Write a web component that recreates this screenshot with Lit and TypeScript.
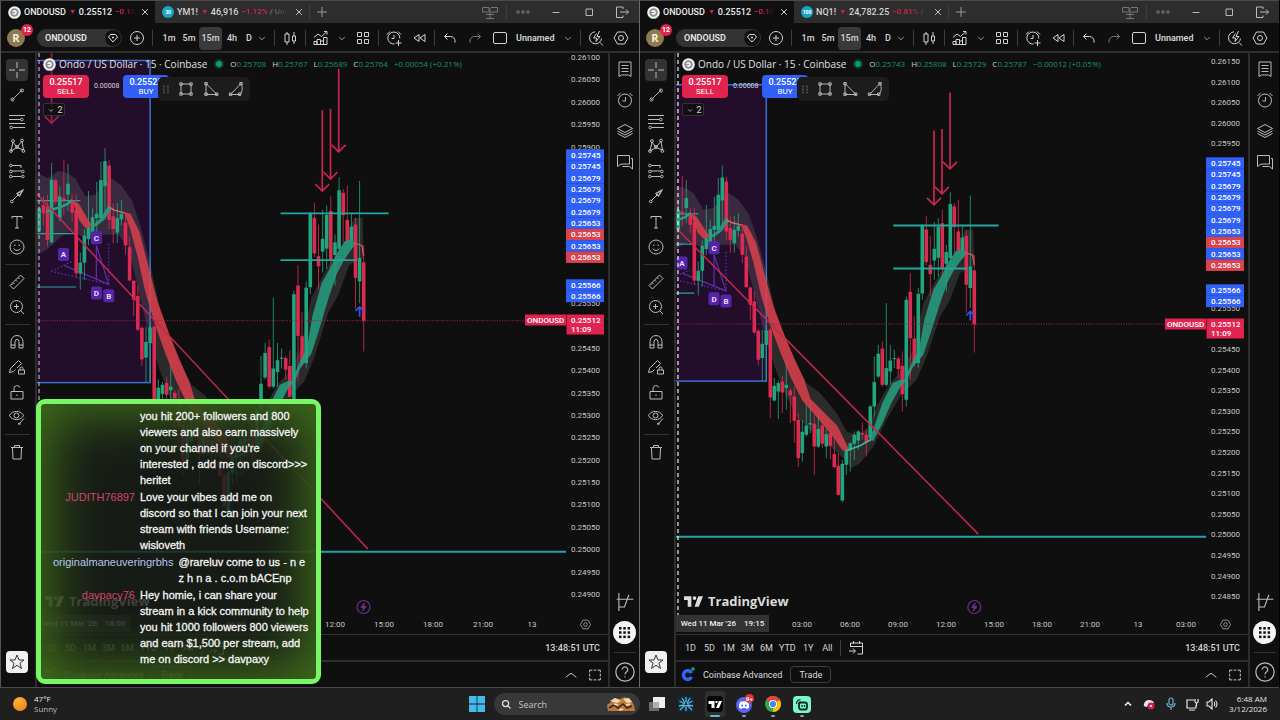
import { LitElement, html, svg, css, nothing } from "lit";
import { customElement, property } from "lit/decorators.js";

/* ---------- icons (18 x 18 grid, 1px strokes) ---------- */
const PATHS: Record<string, string> = {
  plus: "M9 4v10M4 9h10",
  pluscircle: "M9 2.5a6.5 6.5 0 1 0 0 13a6.5 6.5 0 1 0 0-13M9 6v6M6 9h6",
  close: "M5.8 5.8l6.4 6.4M12.2 5.8l-6.4 6.4",
  chevron: "M6 8l3 3l3-3",
  chevup: "M3 11.5L9 7l6 4.5",
  candles: "M6 3v2M6 13v3M4 5h4v8H4zM13 3v4M13 12v3M11.5 7h3v5h-3z",
  indicators: "M2 15.5V12.5h3v3M5 15.5V10.5h3.5v5M8.5 15.5v-3.5h3v3.5M11.5 15.5V8.5H15v7H2M2 8.5L6 5l3.5 2.5L14.5 3M12 2.5h3V5.5",
  grid: "M3.5 3.5h4v4h-4zM10.5 3.5h4v4h-4zM3.5 10.5h4v4h-4zM10.5 10.5h4v4h-4z",
  alarmplus: "M14.8 9.5A6 6 0 1 0 9.5 15M9 6v3.5H6.5M2 5.5L5 2.5M13 2.5l3 3M13.5 11v6M10.5 14h6",
  rewind: "M9 5.5v7L4 9zM15 5.5v7L10 9z",
  undo: "M6.5 4.5L3.5 7.5l3 3M3.5 7.5H9.5a4.5 4.5 0 0 1 4.5 4.5v1.5",
  redo: "M11.5 4.5l3 3l-3 3M14.5 7.5H8.5A4.5 4.5 0 0 0 4 12v1.5",
  square: "M4 3.5h10a1.5 1.5 0 0 1 1.5 1.5v8a1.5 1.5 0 0 1-1.5 1.5H4A1.5 1.5 0 0 1 2.5 13V5A1.5 1.5 0 0 1 4 3.5z",
  flash: "M8 2.8A6 6 0 1 0 14.5 9.5M9.5 4.5L6.5 9h3l-.5 3.5L13 7.5h-3l2.5-5.5M13 13.5l3 3",
  hex: "M5.5 3h7L16 9l-3.5 6h-7L2 9zM9 6.5a2.5 2.5 0 1 0 0 5a2.5 2.5 0 1 0 0-5",
  layout: "M1.5 4.5h6.5v4.5H1.5zM10 4.5h6.5v4.5H10M9 5v10M5 15.5h8M5 11.5h8",
  dots: "M4 7.7a1.3 1.3 0 1 0 0 2.6a1.3 1.3 0 1 0 0-2.6M9 7.7a1.3 1.3 0 1 0 0 2.6a1.3 1.3 0 1 0 0-2.6M14 7.7a1.3 1.3 0 1 0 0 2.6a1.3 1.3 0 1 0 0-2.6",
  min: "M5.5 9.5h7",
  max: "M6 6h6.5v6.5H6z",
  exit: "M10 6V4H3.5v10.5H10V12.5M7 9h8.5M13 6.5L15.5 9L13 11.5",
  cross: "M9 1v6M9 11v6M1 9h6M11 9h6",
  trend: "M4.2 13.8L13.8 4.2M3 13.5a1.5 1.5 0 1 0 3 0a1.5 1.5 0 1 0-3 0M12.5 4.5a1.5 1.5 0 1 0 3 0a1.5 1.5 0 1 0-3 0",
  fib: "M1 3.5h16M1 7.5h11.5M1 11.5h16M5 15.5h12M12.5 7.5a1.3 1.3 0 1 0 2.6 0a1.3 1.3 0 1 0-2.6 0M2 15.5a1.3 1.3 0 1 0 2.6 0a1.3 1.3 0 1 0-2.6 0",
  pattern: "M3 14L5 5l4 5.5l5-6.5l1.5 9L9 10.5L3 14M1.6 14a1.4 1.4 0 1 0 2.8 0a1.4 1.4 0 1 0-2.8 0M3.6 4a1.4 1.4 0 1 0 2.8 0a1.4 1.4 0 1 0-2.8 0M12.6 3.5a1.4 1.4 0 1 0 2.8 0a1.4 1.4 0 1 0-2.8 0M14 14a1.4 1.4 0 1 0 2.8 0a1.4 1.4 0 1 0-2.8 0M7.6 10a1.4 1.4 0 1 0 2.8 0a1.4 1.4 0 1 0-2.8 0",
  forecast: "M4 3.5h9M4 9h9.5M4 14.5h9.5M1.5 3.5a1.3 1.3 0 1 0 2.6 0a1.3 1.3 0 1 0-2.6 0M1.5 9.5a1.3 1.3 0 1 0 2.6 0a1.3 1.3 0 1 0-2.6 0M1.5 14.5a1.3 1.3 0 1 0 2.6 0a1.3 1.3 0 1 0-2.6 0M13.5 9.5a1.3 1.3 0 1 0 2.6 0a1.3 1.3 0 1 0-2.6 0M13.5 14.5a1.3 1.3 0 1 0 2.6 0a1.3 1.3 0 1 0-2.6 0M13 3v3",
  arrow: "M4 14L10 8M2.5 14.5a1.3 1.3 0 1 0 2.6 0a1.3 1.3 0 1 0-2.6 0M8.5 6.5L15.5 2.5L11.5 9.5zM9.5 6.5l2 2L14 4z",
  text: "M4 5.5V3.5h10v2M9 3.5v11.5M7 15h4",
  smile: "M9 2a7 7 0 1 0 0 14a7 7 0 1 0 0-14M6.8 6.5v1.5M11.2 6.5v1.5M5.8 10.5c1 2.5 5.4 2.5 6.4 0",
  ruler: "M2 12.5L12.5 2l3.5 3.5L5.5 16zM5 9.5l1.5 1.5M7.5 7l1.5 1.5M10 4.5l1.5 1.5M3.5 11l1 1",
  zoomin: "M8.5 2.5a6 6 0 1 0 0 12a6 6 0 1 0 0-12M13 13l3 3M8.5 6v5M6 8.5h5",
  magnet: "M3 15V8.5a6 6 0 0 1 12 0V15h-4V8.5a2 2 0 0 0-4 0V15zM3 12h4M11 12h4",
  pencillock: "M2.5 10.5L10.5 2.5l3 3L9 10M2.5 10.5L1.5 14.5l4-1l2-2M10.5 12h6v4h-6zM12 12v-1.5a1.5 1.5 0 0 1 3 0V12",
  unlock: "M3 8.5h12v7.5H3zM6 8.5V5.5a3 3 0 0 1 5.8-1M9 11.5v1.5",
  eye: "M1.5 7.5C4 2 13 2 15.5 7.5C13 13 4 13 1.5 7.5M8.5 5a2.5 2.5 0 1 0 0 5a2.5 2.5 0 1 0 0-5M10 16l2-1l4-4.5M10 16h3",
  trash: "M3 4.5h12M6.5 4.5V2.5h5v2M4.5 4.5l.5 11.5h8l.5-11.5",
  star: "M9 2l2 5h5l-4 3.2L13.5 15.5L9 12.3L4.5 15.5L6 10.2L2 7h5z",
  watch: "M3 2h12v14.5l-2.5-1.5H5.5L3 16.5zM5.5 5.5h7M5.5 8.5h7M5.5 11.5h7",
  alarm: "M9 3a6.5 6.5 0 1 0 0 13a6.5 6.5 0 1 0 0-13M9.5 6v4H6.5M1.5 5L4.5 2M13.5 2l3 3",
  layers: "M9 2.5L16.5 6.5L9 10.5L1.5 6.5zM1.5 9L9 13L16.5 9M1.5 11.5L9 15.5L16.5 11.5",
  chat: "M1.5 2.5h12V11H5L1.5 13.5zM15 5.5h1.5V16L13.5 13.5H6.5",
  tree: "M3.5 1v16M1.5 6.5h15M3.5 13.5h5l4-11",
  help: "M9 1.5a7.5 7.5 0 1 0 0 15a7.5 7.5 0 1 0 0-15M6.7 7a2.3 2.3 0 1 1 3.5 2q-1.2.7-1.2 2M9 12.5v1",
  calendar: "M3.5 8V4h12v11h-5M3.5 7.5h12M6.5 2v3M12.5 2v3M2 12h6M6 9.5L8.5 12L6 14.5",
  full: "M3 6V3.5h3M12 3.5h3V6M15 12v2.5h-3M6 14.5H3V12M3 7.5v3M15 7.5v3M7.5 3.5h3M7.5 14.5h3",
  box4: "M4 4h10v10H4zM2.8 2.8h2.4v2.4H2.8zM12.8 2.8h2.4v2.4h-2.4zM2.8 12.8h2.4v2.4H2.8zM12.8 12.8h2.4v2.4h-2.4z",
  tri: "M4 3.5v11h11zM2.8 2.5h2.4v2.4H2.8zM2.8 13h2.4v2.4H2.8zM13.5 13h2.4v2.4h-2.4z",
  curve: "M3.5 14.5L14 3.5q3 6-1 11zM2.3 13h2.4v2.4H2.3zM12.8 2.5h2.4v2.4h-2.4zM11.5 13h2.4v2.4h-2.4z",
  mag: "M7.5 2.5a5 5 0 1 0 0 10a5 5 0 1 0 0-10M11.3 11.3l4.2 4.2",
};
const ic = (name: string, size = 18) => html`<svg width=${size} height=${size} viewBox="0 0 18 18" fill="none"
  stroke="currentColor" stroke-width="1" aria-hidden="true"><path d=${PATHS[name]}></path></svg>`;

const tvLogo = (w: number, h: number) => html`<svg width=${w} height=${h} viewBox="0 0 36 20" fill="currentColor" aria-hidden="true">
  <path d="M0 0h14v20H7V7H0z"></path><circle cx="20" cy="3.5" r="3.5"></circle><path d="M27 0h9l-8 20h-8z"></path></svg>`;

const coin = html`<svg width="13" height="13" viewBox="0 0 13 13" aria-hidden="true"><circle cx="6.5" cy="6.5" r="6.3" fill="#f2f2f2"></circle>
  <circle cx="6.5" cy="6.5" r="3.3" fill="none" stroke="#8b8d92" stroke-width="1.8"></circle><path d="M3 6.5h4" stroke="#8b8d92"></path></svg>`;

/* ---------- price series: [bar, up?, high, bodyTop, bodyBottom, low] ---------- */
type Bar = [number, number, number, number, number, number];
const BARS: Bar[] = [
  [0, 0, 375, 422, 584, 668], [1, 1, 197, 410, 475, 535], [2, 0, 300, 318, 465, 550], [3, 1, 285, 323, 360, 385],
  [4, 0, 210, 305, 362, 372], [5, 0, 220, 230, 292, 370], [6, 1, 187, 223, 385, 395], [7, 1, 345, 367, 402, 485],
  [8, 0, 240, 280, 415, 440], [9, 1, 265, 291, 384, 440], [10, 1, 277, 357, 392, 450], [11, 0, 318, 405, 433, 498],
  [12, 0, 258, 299, 397, 407], [13, 1, 282, 288, 491, 510], [14, 1, 475, 492, 700, 715], [15, 0, 560, 626, 700, 710],
  [16, 0, 430, 486, 625, 750], [17, 1, 500, 510, 810, 830], [18, 0, 665, 708, 793, 845], [19, 0, 680, 686, 718, 745],
  [20, 1, 660, 685, 688, 715], [21, 1, 645, 692, 725, 765], [22, 1, 520, 715, 765, 770], [23, 0, 635, 656, 765, 770],
  [24, 1, 645, 672, 740, 745], [25, 1, 680, 757, 830, 860], [26, 1, 825, 830, 925, 935], [27, 0, 898, 915, 938, 980],
  [28, 0, 878, 910, 914, 930], [29, 1, 900, 905, 932, 960], [30, 1, 905, 915, 942, 990], [31, 1, 938, 940, 962, 1025],
  [32, 1, 955, 960, 1005, 1035], [33, 1, 990, 1002, 1112, 1118], [34, 0, 970, 1008, 1095, 1098], [35, 0, 915, 973, 1012, 1015],
  [36, 0, 905, 910, 948, 988], [37, 1, 898, 913, 950, 985], [38, 0, 875, 887, 942, 955], [39, 1, 840, 897, 950, 955],
  [40, 0, 855, 882, 950, 1035], [41, 1, 810, 880, 884, 910], [42, 1, 820, 887, 915, 920], [43, 1, 870, 906, 970, 995],
  [44, 0, 850, 870, 985, 1012], [45, 0, 770, 800, 873, 940], [46, 0, 775, 782, 797, 880], [47, 1, 690, 765, 775, 840],
  [48, 0, 738, 755, 788, 850], [49, 1, 752, 760, 785, 868], [50, 1, 745, 768, 812, 815], [51, 0, 595, 600, 803, 865],
  [52, 1, 595, 602, 645, 755], [53, 1, 600, 642, 685, 755], [54, 0, 598, 603, 690, 708], [55, 0, 485, 515, 608, 612],
  [56, 0, 470, 473, 525, 570], [57, 0, 350, 380, 472, 475], [58, 0, 290, 312, 375, 400], [59, 1, 250, 288, 303, 320],
  [60, 1, 258, 300, 340, 368], [61, 0, 260, 295, 330, 370], [62, 0, 140, 155, 305, 330], [63, 1, 107, 143, 212, 300],
  [64, 1, 145, 195, 300, 310], [65, 1, 200, 288, 300, 345], [66, 1, 272, 298, 345, 360], [67, 1, 225, 325, 358, 375],
  [68, 1, 330, 348, 423, 470], [69, 1, 395, 423, 453, 497], [70, 0, 235, 278, 452, 465], [71, 0, 235, 250, 285, 310],
  [72, 1, 150, 205, 235, 280], [73, 0, 138, 245, 250, 290], [74, 1, 213, 240, 300, 309], [75, 0, 192, 196, 254, 262],
  [76, 1, 148, 194, 367, 370], [77, 0, 236, 268, 360, 378], [78, 0, 240, 264, 287, 320], [79, 1, 268, 273, 337, 340],
];
const SHADE = "-10,176 20,190 50,170 75,175 100,190 130,240 160,235 190,200 205,190 235,210 265,250 290,320 320,430 350,560 400,690 440,760 480,790 530,850 560,905 590,915 620,900 650,830 690,760 720,730 760,660 790,520 840,430 880,380 915,300 940,300 942,410 900,430 870,510 840,560 800,680 770,750 720,800 680,870 640,950 600,1000 575,1015 550,985 500,940 450,900 410,860 370,780 340,700 310,600 280,480 255,380 225,345 190,345 150,350 120,350 90,335 60,350 20,385 -10,401";
const DOWN = [
  "92,252 110,260 135,300 150,322 130,327 113,308",
  "243,283 262,288 288,338 315,438 340,528 375,620 405,690 433,750 452,808 482,838 532,888 562,948 568,962 548,962 522,925 477,870 427,812 393,745 362,670 332,590 304,500 281,400 259,325",
];
const UP = [
  "150,320 175,300 198,262 206,275 185,305 160,323",
  "628,930 643,890 667,820 698,760 720,750 733,750 757,695 777,660 793,570 820,480 845,438 866,395 888,363 912,358 917,374 903,392 884,418 863,457 840,522 812,610 790,675 758,714 743,748 722,770 693,822 668,880 640,934",
];

interface WindowSpec {
  id: string; edge: boolean;
  tab2: string; tab2Icon: string; tab2Price: string; tab2Chg: string; tab2Tail: string;
  ohlc: [string, string][]; change: string;
  lastX: number; stepX: number; origin: number; topTick: number; tickY: number; tickStep: number; ticks: number;
  labels: [number, string, string][]; lastY: number;
  times: [number, string][]; date: string; boltX: number;
}
const B = "#3060f5", R = "#d8434f";
const rows = (start: number, start2: number): [number, string, string][] =>
  [["0.25745", B], ["0.25745", B], ["0.25679", B], ["0.25679", B], ["0.25679", B], ["0.25679", B], ["0.25653", B], ["0.25653", R],
   ["0.25653", B], ["0.25653", R], ["0.25566", B], ["0.25566", B]]
    .map(([t, c], i) => [i < 10 ? start + i * 11.35 : start2 + (i - 10) * 11.35, t, c] as [number, string, string]);

const WINDOWS: WindowSpec[] = [
  {
    id: "w1", edge: true, tab2: "YM1!", tab2Icon: "30", tab2Price: "46,916", tab2Chg: "−1.12%", tab2Tail: "/ Unn",
    ohlc: [["O", "0.25708"], ["H", "0.25767"], ["L", "0.25689"], ["C", "0.25764"]], change: "+0.00054 (+0.21%)",
    lastX: 326.7, stepX: 4.107, origin: 4, topTick: 0.261, tickY: 4, tickStep: 22.37, ticks: 25,
    labels: rows(102, 232), lastY: 267,
    times: [[149, "03:00"], [199, "06:00"], [248, "09:00"], [298, "12:00"], [347, "15:00"], [396, "18:00"], [446, "21:00"], [495, "13"]],
    date: "18:00", boltX: 326.5,
  },
  {
    id: "w2", edge: false, tab2: "NQ1!", tab2Icon: "100", tab2Price: "24,782.25", tab2Chg: "−0.81%", tab2Tail: "/",
    ohlc: [["O", "0.25743"], ["H", "0.25808"], ["L", "0.25729"], ["C", "0.25787"]], change: "−0.00012 (+0.05%)",
    lastX: 298.3, stepX: 4, origin: 28.58, topTick: 0.2615, tickY: 8, tickStep: 20.58, ticks: 27,
    labels: rows(110, 237), lastY: 271,
    times: [[126, "03:00"], [174, "06:00"], [222, "09:00"], [270, "12:00"], [318, "15:00"], [366, "18:00"], [414, "21:00"], [462, "13"], [510, "03:00"]],
    date: "19:15", boltX: 298.3,
  },
];

@customElement("trade-window")
class TradeWindow extends LitElement {
  @property({ attribute: false }) spec!: WindowSpec;

  static styles = css`
    :host { display: flex; flex-direction: column; min-width: 0; min-height: 0; background: #0f0f0f; color: #d4d4d4;
      font: 8px/12px Roboto, "Open Sans", sans-serif; border-top: 1px solid #4a4a4a; border-bottom: 1px solid #4a4a4a; box-sizing: border-box; }
    :host([edge]) { border-left: 1px solid #565656; border-right: 1px solid #6a6a6a; }
    * { box-sizing: border-box; }
    svg { display: block; flex: none; }
    button { background: none; border: 0; padding: 0; margin: 0; color: inherit; font: inherit; display: flex; align-items: center; justify-content: center; flex: none; }
    .titlebar { display: flex; height: 22px; flex: none; background: #2d2d2d; align-items: stretch; }
    .tab { display: flex; align-items: center; gap: 3px; padding: 0 3px 0 7px; width: 154px; flex: none; font-size: 9px; font-weight: 500; white-space: nowrap; }
    .tab.on { background: #0f0f0f; color: #ececec; }
    .tab button { width: 14px; }
    .down { color: #d31f4b; font-size: 7px; }
    .fade { flex: 1; min-width: 0; overflow: hidden; color: #e0234f; font-size: 8px; -webkit-mask-image: linear-gradient(90deg, #000 50%, transparent 100%); }
    .fade .tail { color: #999; }
    .badge { width: 12px; height: 12px; border-radius: 50%; background: #1ba5c4; color: #fff; font-size: 5px; line-height: 12px; text-align: center; font-weight: 700; }
    .sep { width: 1px; background: #3d3d3d; height: 16px; margin: 0 6px; flex: none; align-self: center; }
    .sep.flush { margin: 0; }
    .addtab { width: 24px; color: #999; }
    .wctl { margin-left: auto; display: flex; align-items: center; gap: 15px; padding-right: 8px; color: #bbb; }
    .wctl .sep { margin: 0 -8px; }
    .dim { color: #777; }
    .toolbar { height: 28px; flex: none; display: flex; align-items: center; padding: 2px 0 0 6px; }
    .avatar { position: relative; width: 18px; height: 18px; border-radius: 50%; background: #8d7b4f; color: #f5eedc; text-align: center; font: 700 11px/18px "Open Sans", sans-serif; margin-right: 12px; flex: none; }
    .count { position: absolute; left: 14px; top: -5px; width: 12px; height: 12px; border-radius: 6px; background: #e0234f; color: #fff; font: 700 7px/12px Roboto, sans-serif; }
    .symbol { width: 85px; height: 18px; border-radius: 9px; background: #333; justify-content: space-between; padding: 0 1px 0 8px; font-size: 9px; font-weight: 600; color: #e6e6e6; margin-right: 6px; }
    .gem { width: 16px; height: 16px; border-radius: 50%; background: #111; display: grid; place-items: center; }
    .ivl { height: 23px; min-width: 20px; font-size: 9px; font-weight: 500; border-radius: 4px; }
    .ivl.slim { min-width: 14px; }
    .ivl.on { background: #3a3a3a; min-width: 23px; }
    .caret { width: 12px; color: #aaa; }
    .group { display: flex; align-items: center; gap: 7px; }
    .group.tight { gap: 6px; }
    .name { font-size: 9px; font-weight: 600; }
    .body { flex: 1; min-height: 0; display: grid; grid-template-columns: 34px minmax(0, 1fr) 29px; column-gap: 2px; border-top: 2px solid #2d2d2d; background: #2d2d2d; }
    .tools { background: #0f0f0f; display: flex; flex-direction: column; align-items: center; padding: 6px 2px 14px 0; }
    .tools > div { display: flex; flex-direction: column; gap: 3px; }
    .tools .first { height: 199px; justify-content: space-between; gap: 0; }
    .tools button { width: 22px; height: 22px; border-radius: 4px; color: #bdbdbd; }
    .tools button.on { background: #333; }
    .tools button.star { margin-top: auto; background: #f0f0f0; color: #333; }
    .rule { height: 1px; width: 25px; background: #333; margin: 6px 0; flex: none; }
    .strip { background: #0f0f0f; display: flex; flex-direction: column; align-items: center; gap: 9px; padding: 5px 0 4px; color: #bbb; }
    .strip button { width: 22px; height: 22px; }
    .strip .low { margin-top: auto; display: flex; flex-direction: column; align-items: center; gap: 8px; }
    .strip .low .rule { margin: 0; width: 22px; }
    .strip .apps { background: #f4f4f4; border-radius: 50%; width: 23px; height: 23px; color: #111; }
    .main { display: flex; flex-direction: column; min-width: 0; min-height: 0; background: #0f0f0f; }
    .plot { flex: 1; min-height: 0; display: grid; grid-template-columns: minmax(0, 1fr) 42px; position: relative; }
    .chart, .axis { width: 100%; height: 100%; min-height: 0; }
    .axis { overflow: visible; }
    .axis text, .taxis text { font: 8px Roboto, sans-serif; fill: #c8c8c8; }
    .axis .tag { fill: #fff; font-weight: 500; }
    .over { position: absolute; left: 6px; right: 42px; top: 4px; display: flex; flex-direction: column; align-items: flex-start; gap: 4px; }
    .legend { display: flex; align-items: center; gap: 3px; height: 14px; white-space: nowrap; }
    .legend h1 { margin: 0; font: 500 10px/14px "Open Sans", sans-serif; color: #e0e0e0; }
    .live { width: 6px; height: 6px; border-radius: 50%; background: #0f9d6f; box-shadow: 0 0 0 2px #0b3b2c; margin: 0 5px 0 6px; }
    .ohlc { display: flex; gap: 6px; color: #17926d; font-family: "Open Sans", sans-serif; }
    .ohlc b { color: #d0d0d0; font-weight: 500; }
    .order { display: flex; align-items: flex-start; gap: 5px; height: 24px; }
    .sell, .buy { width: 46px; height: 23px; border-radius: 4px; color: #fff; flex-direction: column; line-height: 10px; font-size: 8px; }
    .sell b, .buy b { font-size: 9px; font-weight: 500; }
    .sell { background: #e0234f; }
    .buy { background: #3060f5; }
    .spread { font-size: 7px; line-height: 23px; width: 24px; text-align: center; }
    .float { display: flex; align-items: center; gap: 7px; width: 92px; height: 24px; margin-left: -16px; margin-top: 2px; background: #1c1c1c; border-radius: 5px; padding-left: 4px; color: #b5b5b5; }
    .grip { width: 8px; height: 9px; background: radial-gradient(circle, #4a4a4a 1px, transparent 1.2px) 0 0 / 4px 3px; }
    .more { height: 13px; width: 22px; border: 1px solid #333; border-radius: 2px; background: #0f0f0fcc; font-size: 9px; }
    .mark { position: absolute; left: 8px; bottom: 6px; display: flex; align-items: center; gap: 5px; color: #dcdcdc; font: 700 13px/16px "Open Sans", sans-serif; }
    .taxis { height: 20px; flex: none; display: grid; grid-template-columns: minmax(0, 1fr) 42px; border-bottom: 1px solid #333; position: relative; align-items: center; }
    .taxis > svg { width: 100%; height: 19px; }
    .taxis > button { color: #bbb; padding-right: 3px; }
    .when { position: absolute; left: 0; top: 0; height: 17px; width: 93px; display: flex; align-items: center; justify-content: center; gap: 8px; background: #333; color: #eee; font-weight: 500; }
    .range { height: 25px; flex: none; display: flex; align-items: center; padding: 0 8px; gap: 6px; font-size: 9px; }
    .range button { min-width: 13px; }
    .range .sep { margin: 0; }
    .range time { margin-left: auto; font-weight: 500; }
    .broker { height: 27px; flex: none; border-top: 2px solid #2d2d2d; display: flex; align-items: center; padding: 0 5px; gap: 8px; font-size: 9px; color: #ddd; }
    .trade { border: 1px solid #3c3c3c; border-radius: 4px; width: 41px; height: 17px; }
    .broker .push { margin-left: auto; }
  `;

  private plot() {
    const s = this.spec;
    const kx = s.stepX / 12, ky = s.tickStep / 20.58 / 3;
    const X = (x: number) => +(s.lastX + (x - 943) * kx).toFixed(1);
    const Y = (y: number) => +(s.origin + (y + 144.7) * ky).toFixed(1);
    const pts = (p: string) => p.split(" ").map((q) => { const [a, b] = q.split(",").map(Number); return `${X(a)},${Y(b)}`; }).join(" ");
    const hline = (x1: number, x2: number, y: number, w = 1.8) => svg`<line x1=${X(x1)} x2=${X(x2)} y1=${Y(y)} y2=${Y(y)} stroke="#27a59f" stroke-width=${w}/>`;
    const drop = (x: number, y1: number, y2: number, o = 1) => svg`<path opacity=${o} fill="none" stroke="#c9264f" stroke-width="1.7" d="M${X(x)} ${Y(y1)}V${Y(y2)}m-7 -7l7 7l7 -7"/>`;
    const tag = (x: number, y: number, t: string) => svg`<rect x=${X(x) - 5.5} y=${Y(y) - 6.5} width="11" height="13" rx="2" fill="#5624a8"/>
      <text x=${X(x)} y=${Y(y) + 3} text-anchor="middle" fill="#eadcff" font-size="8" font-weight="700">${t}</text>`;
    return html`<svg class="chart" aria-label="ONDOUSD price chart" role="img">
      <rect x="-4" y=${Y(-135)} width=${X(319) + 4} height=${Y(754) - Y(-135)} fill="#220e2a" stroke="#3b6fd8" stroke-width="1.5"></rect>
      <polygon points=${pts(SHADE)} fill="#8a8a8a" opacity=".23"></polygon>
      ${drop(31, -420, 38, 0.75)}
      ${hline(-20, 115, 252, 1.2)}${hline(-20, 100, 343, 1.2)}${hline(-20, 103, 490, 1.2)}
      <line x1="0" x2="100%" y1=${Y(1221)} y2=${Y(1221)} stroke="#27a0a5" stroke-width="2"></line>
      <g stroke="#5b2bb0" fill="none" stroke-width="1.3">
        <path d="M${X(66)} ${Y(430)}L${X(198)} ${Y(483)}L${X(162)} ${Y(375)}V${Y(472)}"></path>
        <path stroke-dasharray="1.5 2" d="M${X(30)} ${Y(447)}L${X(198)} ${Y(483)}V${Y(365)}M${X(30)} ${Y(447)}L${X(90)} ${Y(420)}"></path>
      </g>
      ${BARS.map(([k, up, h, a, b, l]) => {
        const x = X(943 - 12 * k), c = up ? "#22a47e" : "#dc2a50";
        return svg`<line x1=${x} x2=${x} y1=${Y(h)} y2=${Y(l)} stroke=${c} stroke-width=".8"/><rect x=${x - 1.8} y=${Y(a)} width="3.6" height=${Math.max(1, Y(b) - Y(a))} fill=${c}/>`;
      })}
      ${DOWN.map((p) => svg`<polygon points=${pts(p)} fill="#dc3f4b" opacity=".85"/>`)}
      ${UP.map((p) => svg`<polygon points=${pts(p)} fill="#26a083" opacity=".85"/>`)}
      <polyline points=${pts("200,270 215,278 245,286")} fill="none" stroke="#d86a70" stroke-width="1.4"></polyline>
      <polyline points=${pts("915,368 938,376 943,405")} fill="none" stroke="#c85a58" stroke-width="1.4"></polyline>
      <polyline points=${pts("560,962 600,948 632,930")} fill="none" stroke="#3fb49a" stroke-width="1.6"></polyline>
      <polyline points=${pts("15,282 55,270 75,262 92,250")} fill="none" stroke="#26a083" stroke-width="2.5"></polyline>
      <line x1=${X(-20)} y1=${Y(225)} x2=${X(955)} y2=${Y(1213)} stroke="#c4284d" stroke-width="1.5"></line>
      <line x1="0" x2="100%" y1=${Y(583)} y2=${Y(583)} stroke="#a42345" stroke-width="1" stroke-dasharray="1 1.5"></line>
      ${hline(700, 1016, 287)}${hline(700, 922, 416)}
      ${drop(822, 2, 225)}${drop(846, -2, 192)}${drop(870, -112, 117)}
      ${tag(66, 400, "A")}${tag(162, 354, "C")}${tag(162, 507, "D")}${tag(198, 514, "B")}
      <path d="M${X(931)} ${Y(572)}V${Y(545)}m-4 4l4 -4l4 4" fill="none" stroke="#2d55ee" stroke-width="1.7"></path>
      <line x1="2" x2="2" y1="0" y2="100%" stroke=${s.edge ? "#b9b0bd" : "#f2f2f2"} stroke-width="1.2" stroke-dasharray="4 3"></line>
      <g stroke="#6f2f8d" fill="none"><circle cx=${s.boltX} cy="554" r="6.5" stroke-width="1.2"></circle><path fill="#6f2f8d" d="M${s.boltX + 1} 550l-3.5 4.5h2.5l-1 3.5l3.5 -4.5h-2.5z"></path></g>
    </svg>`;
  }

  private axis() {
    const s = this.spec;
    return html`<svg class="axis" aria-label="Price scale">
      ${Array.from({ length: s.ticks }, (_, i) => {
        const y = s.tickY + i * s.tickStep;
        const covered = Math.abs(y - s.lastY - 3) < 12 || s.labels.some(([ly]) => Math.abs(y - ly) < 5);
        return covered ? nothing : svg`<text x="5" y=${(y + 3).toFixed(1)}>${(s.topTick - i * 0.0005).toFixed(5)}</text>`;
      })}
      ${s.labels.map(([y, t, c]) => svg`<rect x="0" y=${y - 5.7} width="38" height="11.5" fill=${c}/><text class="tag" x="5" y=${y + 3}>${t}</text>`)}
      <rect x="-41" y=${s.lastY - 5.5} width="41" height="11" fill="#e0234f"></rect>
      <text class="tag" x="-39" y=${s.lastY + 3}>ONDOUSD</text>
      <rect x="0.5" y=${s.lastY - 5.5} width="37.5" height="20" fill="#e0234f"></rect>
      <text class="tag" x="5" y=${s.lastY + 3}>0.25512</text><text class="tag" x="5" y=${s.lastY + 12}>11:09</text>
    </svg>`;
  }

  render() {
    const s = this.spec;
    const b = (name: string, label: string, cls = "", size = 18) => html`<button class=${cls} aria-label=${label}>${ic(name, size)}</button>`;
    const sep = html`<span class="sep"></span>`;
    const rule = html`<div class="rule"></div>`;
    return html`
      <div class="titlebar">
        <div class="tab on">${coin}<span>ONDOUSD</span><span class="down">▼</span><span>0.25512</span><span class="fade">−0.18%</span>${b("close", "Close tab", "", 16)}</div>
        <div class="tab"><span class="badge">${s.tab2Icon}</span><span>${s.tab2}</span><span class="down">▼</span><span>${s.tab2Price}</span><span class="fade">${s.tab2Chg} <span class="tail">${s.tab2Tail}</span></span>${b("close", "Close tab", "", 16)}</div>
        <span class="sep flush"></span>${b("plus", "New tab", "addtab")}
        <div class="wctl">${b("layout", "Layouts", "dim")}${sep}${b("dots", "More", "dim")}${b("min", "Minimize")}${b("max", "Maximize")}${b("exit", "Detach")}</div>
      </div>
      <div class="toolbar">
        <div class="avatar">R<span class="count">12</span></div>
        <button class="symbol">ONDOUSD<span class="gem"><svg width="10" height="10" viewBox="0 0 10 10" fill="none" stroke="#ddd"><path d="M2.5 1.5h5L9.5 4L5 9L.5 4zM5 3.5v2M4 4.5h2"></path></svg></span></button>
        ${b("pluscircle", "Compare")}${sep}
        <button class="ivl">1m</button><button class="ivl">5m</button><button class="ivl on">15m</button><button class="ivl">4h</button><button class="ivl slim">D</button>${b("chevron", "Intervals", "caret", 16)}
        ${sep}${b("candles", "Chart type")}${sep}
        <div class="group tight">${b("indicators", "Indicators")}${b("chevron", "Favourite indicators", "caret", 16)}${b("grid", "Templates")}</div>
        ${sep}<div class="group">${b("alarmplus", "Alert")}${b("rewind", "Replay")}</div>
        ${sep}<div class="group">${b("undo", "Undo")}${b("redo", "Redo", "dim")}${b("square", "Layout")}<span class="name">Unnamed</span>${b("chevron", "Layout menu", "caret", 16)}</div>
        ${sep}<div class="group">${b("flash", "Quick search")}${b("hex", "Settings")}</div>
      </div>
      <div class="body">
        <nav class="tools" aria-label="Drawing tools">
          <div class="first">${b("cross", "Cursor", "on")}${b("trend", "Trend line")}${b("fib", "Fib retracement")}${b("pattern", "Patterns")}${b("forecast", "Forecasting")}${b("arrow", "Arrow")}${b("text", "Text")}${b("smile", "Icons")}</div>
          ${rule}<div>${b("ruler", "Measure")}${b("zoomin", "Zoom in")}</div>
          ${rule}<div>${b("magnet", "Magnet")}${b("pencillock", "Stay in drawing mode")}${b("unlock", "Lock drawings")}${b("eye", "Hide drawings")}</div>
          ${rule}${b("trash", "Remove")}${b("star", "Favourites", "star")}
        </nav>
        <div class="main">
          <div class="plot">
            ${this.plot()}${this.axis()}
            <div class="over">
              <div class="legend">${coin}<h1>Ondo / US Dollar · 15 · Coinbase</h1><span class="live"></span>
                <div class="ohlc">${s.ohlc.map(([k, v]) => html`<span><b>${k}</b>${v}</span>`)}<span>${s.change}</span></div></div>
              <div class="order">
                <button class="sell"><b>0.25517</b>SELL</button><span class="spread">0.00008</span><button class="buy"><b>0.25525</b>BUY</button>
                <div class="float"><span class="grip"></span>${b("box4", "Rectangle")}${b("tri", "Triangle")}${b("curve", "Curve")}</div>
              </div>
              <button class="more">${ic("chevron", 12)}2</button>
            </div>
            <div class="mark">${tvLogo(19, 11)}TradingView</div>
          </div>
          <div class="taxis">
            <svg aria-label="Time scale">${s.times.map(([x, t]) => svg`<text x=${x} y="12" text-anchor="middle">${t}</text>`)}</svg>
            <div class="when"><span>Wed 11 Mar '26</span><span>${s.date}</span></div>
            ${b("hex", "Axis settings", "", 13)}
          </div>
          <div class="range">
            ${["1D", "5D", "1M", "3M", "6M", "YTD", "1Y", "All"].map((r) => html`<button>${r}</button>`)}${sep}${b("calendar", "Go to")}
            <time>13:48:51 UTC</time>
          </div>
          <div class="broker">
            <svg width="14" height="15" viewBox="0 0 14 15" fill="none"><path d="M10.5 6A4.3 4.3 0 1 0 10.5 10" stroke="#2e66f6" stroke-width="3.4"></path><circle cx="12" cy="2" r="1.8" fill="#1aa377"></circle></svg>
            <span>Coinbase Advanced</span><button class="trade">Trade</button>
            ${b("chevup", "Expand", "push", 16)}${b("full", "Full screen", "", 16)}
          </div>
        </div>
        <aside class="strip">
          ${b("watch", "Watchlist")}${b("alarm", "Alerts")}${b("layers", "Object tree")}${b("chat", "Chats")}
          <div class="low">${b("tree", "Markets", "", 20)}
            <button class="apps" aria-label="Products"><svg width="13" height="13" viewBox="0 0 13 13" fill="currentColor">${[0, 1, 2].map((i) => [0, 1, 2].map((j) => svg`<rect x=${1 + i * 4.3} y=${1 + j * 4.3} width="2.5" height="2.5"/>`))}</svg></button>
            ${rule}${b("help", "Help", "", 22)}</div>
        </aside>
      </div>`;
  }
}

const CHAT = [
  { who: "", color: "#d8436b", text: "you hit 200+ followers and 800\nviewers and also earn massively\non your channel if you're\ninterested , add me on discord>>>\nheritet" },
  { who: "JUDITH76897", color: "#d3446c", text: "Love your vibes add me on\ndiscord so that I can join your next\nstream with friends Username:\nwisloveth" },
  { who: "originalmaneuveringrbhs", color: "#b3c8ee", text: "@rareluv come to us - n e\nz h n a . c.o.m bACEnp" },
  { who: "davpacy76", color: "#d3446c", text: "Hey homie, i can share your\nstream in a kick community to help\nyou hit 1000 followers 800 viewers\nand earn $1,500 per stream, add\nme on discord >> davpaxy" },
];

@customElement("stream-chat")
class StreamChat extends LitElement {
  static styles = css`
    :host { box-sizing: border-box; display: flex; flex-direction: column; justify-content: flex-end; gap: 1px; overflow: hidden;
      border: 5px solid #78f765; border-radius: 9px; padding: 0 8px 12px 12px;
      background: rgba(26, 31, 24, .82); box-shadow: inset 0 0 54px 10px #40701b;
      font: 11px/16px "Liberation Sans", Arial, sans-serif; color: #f4f4f4; }
    .row { display: flex; gap: 5px; }
    .who { min-width: 82px; text-align: right; flex: none; }
    .text { white-space: pre; -webkit-text-stroke: .3px #f4f4f4; }
  `;
  render() {
    return CHAT.map((m) => html`<div class="row"><span class="who" style="color:${m.color}">${m.who}</span><span class="text">${m.text}</span></div>`);
  }
}

@customElement("task-bar")
class TaskBar extends LitElement {
  static styles = css`
    :host { display: grid; grid-template-columns: 1fr auto 1fr; align-items: center; background: #1f1f1f; color: #e4e4e4; font: 8px/10px "Open Sans", sans-serif; padding: 0 13px; }
    * { box-sizing: border-box; }
    svg { display: block; }
    button { background: none; border: 0; padding: 0; color: inherit; display: grid; place-items: center; }
    .weather { display: flex; align-items: center; gap: 7px; }
    .weather b, .clock { font-weight: 500; }
    .weather span { color: #bbb; }
    .weather div { display: flex; flex-direction: column; }
    .sun { width: 14px; height: 14px; border-radius: 50%; background: radial-gradient(circle at 35% 30%, #ffb53a, #ef7413); }
    .mid { display: flex; align-items: center; gap: 9px; }
    .search { display: flex; align-items: center; width: 146px; height: 22px; border-radius: 11px; background: #383838; padding: 0 4px 0 7px; gap: 7px; margin-right: -2px; }
    .search input { flex: 1; min-width: 0; background: none; border: 0; padding: 0; outline: 0; font: 9px "Open Sans", sans-serif; color: #ddd; }
    .search input::placeholder { color: #c4c4c4; opacity: 1; }
    .app { position: relative; width: 20px; height: 26px; }
    .app.run::after { content: ""; position: absolute; left: 8px; bottom: 0; width: 4px; height: 2px; border-radius: 1px; background: #9a9a9a; }
    .app.active { background: #303030; border-radius: 3px; }
    .app.active::after { content: ""; position: absolute; left: 5px; bottom: 0; width: 10px; height: 2px; border-radius: 1px; background: #5bb8e0; }
    .tray { display: flex; align-items: center; justify-content: flex-end; gap: 8px; }
    .tray .near { margin-left: -1px; }
    .clock { text-align: right; margin-left: 2px; }
  `;
  render() {
    return html`
      <div class="weather"><span class="sun"></span><div><b>47°F</b><span>Sunny</span></div></div>
      <div class="mid">
        <button aria-label="Start"><svg width="16" height="16" viewBox="0 0 16 16" fill="#45b9ee"><path d="M0 0h7.6v7.6H0zM8.4 0H16v7.6H8.4zM0 8.4h7.6V16H0zM8.4 8.4H16V16H8.4z"></path></svg></button>
        <label class="search"><svg width="11" height="11" viewBox="0 0 18 18" fill="none" stroke="#e0e0e0" stroke-width="2"><path d=${PATHS.mag}></path></svg>
          <input type="text" placeholder="Search" aria-label="Search" />
          <svg width="30" height="17" viewBox="0 0 30 17"><path d="M2 15L1 9l4-3l3-4l6 1l5-2l6 3l3 5l1 6z" fill="#b9793f"></path><path d="M4 5l5-3l6 3l-4 2zM17 3l6-1l3 4l-5 1z" fill="#efd9ae"></path><path d="M3 12l5-3l4 3l5-4l4 4l5-2" fill="none" stroke="#3d2415" stroke-width="1.5"></path><path d="M8 8l4 1M20 9l4-1M13 14l4-1" stroke="#f7e3b4" stroke-width="1.5"></path></svg></label>
        <button class="app" aria-label="Task view"><svg width="18" height="16" viewBox="0 0 18 16"><path d="M1 6h10v9H1z" fill="#6b6b6b"></path><path d="M5 1h12v11H5z" fill="#eee"></path><path d="M5 6h6v6H5z" fill="#b0b0b0"></path></svg></button>
        <button class="app" aria-label="Notes"><svg width="16" height="16" viewBox="0 0 16 16" fill="none" stroke="#62b7d2" stroke-width="1.3"><rect width="16" height="16" fill="#0f2a3a" stroke="none"></rect><path d="M8 1v5M4 2l3 5M12 2L9 7M1.5 5L7 8M14.5 5L9 8M2 14l5-5M14 14L9 9M8 9v6M1 10l5-1M15 10l-5-1"></path></svg></button>
        <button class="app active" aria-label="TradingView"><svg width="16" height="16" viewBox="0 0 16 16"><rect width="16" height="16" rx="3" fill="#050505"></rect><path d="M1.5 5h6v7H4.5V8h-3zM12 5h3l-3 7H9zM8.5 5h2v2h-2z" fill="#fff"></path></svg></button>
        <button class="app run" aria-label="Discord"><svg width="20" height="20" viewBox="0 0 20 20"><circle cx="10" cy="11" r="8" fill="#5865f2"></circle><path d="M6 8q4-1.5 8 0q1.5 3 1 6l-2.5 1l-.7-1H8.2l-.7 1L5 14q-.5-3 1-6z" fill="#fff"></path><circle cx="8.2" cy="11.5" r="1" fill="#5865f2"></circle><circle cx="11.8" cy="11.5" r="1" fill="#5865f2"></circle><circle cx="15.5" cy="4.5" r="4.5" fill="#e0353d"></circle><text x="15.5" y="6.8" font-size="6" text-anchor="middle" font-weight="700" fill="#fff">9+</text></svg></button>
        <button class="app run" aria-label="Chrome"><svg width="16" height="16" viewBox="0 0 16 16"><circle cx="8" cy="8" r="8" fill="#34a853"></circle><path d="M8 8L1.1 4A8 8 0 0 1 14.9 4z" fill="#ea4335"></path><path d="M8 8L14.9 4A8 8 0 0 1 8 16z" fill="#fbbc05"></path><circle cx="8" cy="8" r="4" fill="#fff"></circle><circle cx="8" cy="8" r="3.1" fill="#4285f4"></circle></svg></button>
        <button class="app run" aria-label="Streamlabs"><svg width="18" height="17" viewBox="0 0 18 17"><rect width="18" height="17" rx="4" fill="#7df5cb"></rect><path d="M3.5 8q0-4 4-4.5M5.5 8q0-2 2-2.5" fill="none" stroke="#0c2b22" stroke-width="1.1"></path><rect x="6" y="6.5" width="8" height="7" rx="2" fill="none" stroke="#0c2b22" stroke-width="1.8"></rect><path d="M9 9v2M11.5 9v2" stroke="#0c2b22" stroke-width="1.3"></path></svg></button>
      </div>
      <div class="tray">
        <svg width="12" height="12" viewBox="0 0 12 12" fill="none" stroke="#fff" stroke-width="1.5"><path d="M3 7.5l3-3l3 3"></path></svg>
        <svg width="14" height="12" viewBox="0 0 14 12"><path d="M2 6q1-4 5-4q4 0 5 3L4 9q-3-1-2-3z" fill="#e8e0e2"></path><circle cx="9" cy="8" r="3.5" fill="#d32048"></circle><path d="M8 7l2 2M10 7l-2 2" stroke="#fff" stroke-width=".8"></path></svg>
        <svg width="14" height="14" viewBox="0 0 12 14" fill="none" stroke="#6db4cf" stroke-width="1.2"><rect x="4" y="1" width="4" height="7" rx="2"></rect><path d="M2 6q0 4 4 4q4 0 4-4M6 10v3"></path></svg>
        <svg width="13" height="13" viewBox="0 0 13 13" fill="none" stroke="#e8e8e8" stroke-width="1.2"><path d="M8 2H1v8h9V7M3 12h6M9 1v3q1.5 2 3 0V1M10.5 5v3"></path></svg>
        <svg class="near" width="13" height="12" viewBox="0 0 13 12" fill="none" stroke="#e8e8e8" stroke-width="1.1"><path d="M1 4h2l3-3v10l-3-3H1zM8 4q1.5 2 0 4M9.5 2.5q3 3.5 0 7"></path></svg>
        <div class="clock">6:48 AM<br />3/12/2026</div>
      </div>`;
  }
}

@customElement("app-root")
class AppRoot extends LitElement {
  static styles = css`
    :host { display: grid; grid-template-rows: minmax(0, 1fr) 32px; height: 100vh; position: relative; background: #000; overflow: hidden; }
    .desk { display: grid; grid-template-columns: 1fr 1fr; min-height: 0; }
    .desk > :last-of-type { margin-right: 1px; }
    stream-chat { position: absolute; left: 36px; bottom: 36px; width: 285px; height: 285px; }
  `;
  render() {
    return html`<div class="desk">${WINDOWS.map((w) => html`<trade-window ?edge=${w.edge} .spec=${w}></trade-window>`)}</div>
      <task-bar></task-bar><stream-chat></stream-chat>`;
  }
}
